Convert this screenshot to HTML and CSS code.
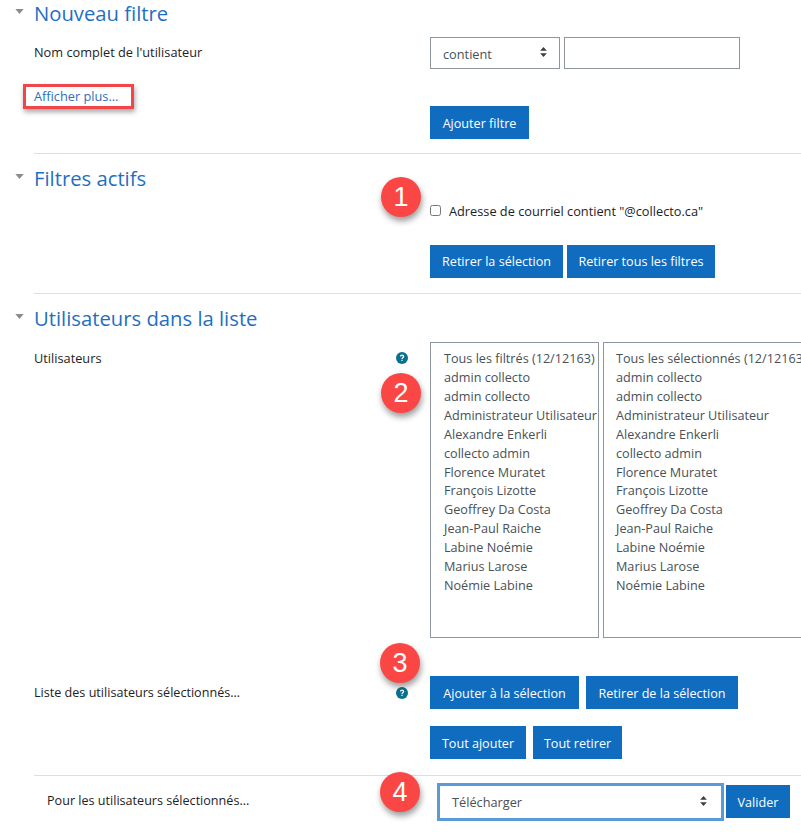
FILE: index.html
```html
<!DOCTYPE html>
<html lang="fr">
<head>
<meta charset="utf-8">
<title>Action groupée</title>
<link rel="stylesheet" href="styles.css">
</head>
<body>
<main class="page">
  <section class="sec sec-new">
    <h3 class="head"><svg class="caret" viewBox="0 0 10 6"><path d="M0 0h10L5 6z"/></svg>Nouveau filtre</h3>
    <div class="row row-name">
      <div class="label">Nom complet de l'utilisateur</div>
      <div class="ctrl inline">
        <div class="select sel-small"><span>contient</span><svg class="updown" viewBox="0 0 8 12"><path d="M4 0l4 4.6H0zM4 12L0 7.4h8z"/></svg></div>
        <div class="input"></div>
      </div>
    </div>
    <div class="row row-more">
      <div class="label"><a class="more" href="#">Afficher plus...</a></div>
      <div class="ctrl"><button class="btn w-filter">Ajouter filtre</button></div>
    </div>
  </section>

  <section class="sec sec-active">
    <h3 class="head"><svg class="caret" viewBox="0 0 10 6"><path d="M0 0h10L5 6z"/></svg>Filtres actifs</h3>
    <div class="row row-check">
      <div class="label"></div>
      <label class="ctrl check"><input type="checkbox"><span>Adresse de courriel contient "@collecto.ca"</span></label>
    </div>
    <div class="row row-btns">
      <div class="label"></div>
      <div class="ctrl btns"><button class="btn w-sel">Retirer la sélection</button><button class="btn w-allf">Retirer tous les filtres</button></div>
    </div>
  </section>

  <section class="sec sec-users">
    <h3 class="head"><svg class="caret" viewBox="0 0 10 6"><path d="M0 0h10L5 6z"/></svg>Utilisateurs dans la liste</h3>
    <div class="row row-lists">
      <div class="label label-help">Utilisateurs
        <svg class="help" viewBox="0 0 12 12"><circle cx="6" cy="6" r="6"/><path class="q" d="M3.9 4.6c0-1.3 1-2 2.2-2s2.1.8 2.1 1.9c0 1.5-1.6 1.5-1.6 2.6H5.4c0-1.7 1.5-1.8 1.5-2.5 0-.4-.4-.8-.9-.8-.6 0-.9.4-.9.8zM5.4 7.8h1.2v1.3H5.4z"/></svg>
      </div>
      <div class="ctrl lists">
        <div class="listbox lb-a">
          <div>Tous les filtrés (12/12163)</div><div>admin collecto</div><div>admin collecto</div><div>Administrateur Utilisateur</div><div>Alexandre Enkerli</div><div>collecto admin</div><div>Florence Muratet</div><div>François Lizotte</div><div>Geoffrey Da Costa</div><div>Jean-Paul Raiche</div><div>Labine Noémie</div><div>Marius Larose</div><div>Noémie Labine</div>
        </div>
        <div class="listbox lb-b">
          <div>Tous les sélectionnés (12/12163)</div><div>admin collecto</div><div>admin collecto</div><div>Administrateur Utilisateur</div><div>Alexandre Enkerli</div><div>collecto admin</div><div>Florence Muratet</div><div>François Lizotte</div><div>Geoffrey Da Costa</div><div>Jean-Paul Raiche</div><div>Labine Noémie</div><div>Marius Larose</div><div>Noémie Labine</div>
        </div>
      </div>
    </div>
    <div class="row row-actions">
      <div class="label label-help label-mid">Liste des utilisateurs sélectionnés...
        <svg class="help" viewBox="0 0 12 12"><circle cx="6" cy="6" r="6"/><path class="q" d="M3.9 4.6c0-1.3 1-2 2.2-2s2.1.8 2.1 1.9c0 1.5-1.6 1.5-1.6 2.6H5.4c0-1.7 1.5-1.8 1.5-2.5 0-.4-.4-.8-.9-.8-.6 0-.9.4-.9.8zM5.4 7.8h1.2v1.3H5.4z"/></svg>
      </div>
      <div class="ctrl btns btns-wide"><button class="btn w-add">Ajouter à la sélection</button><button class="btn w-rem">Retirer de la sélection</button></div>
    </div>
    <div class="row row-all">
      <div class="label"></div>
      <div class="ctrl btns btns-wide"><button class="btn w-alladd">Tout ajouter</button><button class="btn w-allrem">Tout retirer</button></div>
    </div>
  </section>

  <section class="bottom">
    <div class="bottom-label">Pour les utilisateurs sélectionnés...</div>
    <div class="select sel-focus"><span>Télécharger</span><svg class="updown" viewBox="0 0 8 12"><path d="M4 0l4 4.6H0zM4 12L0 7.4h8z"/></svg></div>
    <button class="btn btn-go">Valider</button>
  </section>
</main>
<div class="num n1">1</div>
<div class="num n2">2</div>
<div class="num n3">3</div>
<div class="num n4">4</div>
<div class="redbox"></div>
</body>
</html>
```
FILE: styles.css
```css
* { box-sizing: border-box; }
html, body { margin: 0; height: 833px; overflow: hidden; background: #fff; }
body {
  position: relative;
  font-family: "Open Sans", "Noto Sans", "Liberation Sans", sans-serif;
  font-size: 12.75px;
  color: #1d2125;
}
.page { width: 801px; }
.sec { margin-left: 34px; }
.sec-new { height: 153px; }
.sec-active { height: 140px; border-top: 1px solid #dfdfdf; }
.sec-users { height: 482px; border-top: 1px solid #dfdfdf; }
.head {
  position: relative;
  margin: 0;
  font-size: 20.25px;
  font-weight: 400;
  line-height: 26px;
  color: #1f6fc0;
}
.sec-active .head,
.sec-users .head { padding-top: 11px; }
.caret { position: absolute; left: -19px; bottom: 12px; width: 9px; height: 5px; }
.caret path { fill: #8a8d90; }
.row { display: flex; }
.label { width: 396px; flex: none; position: relative; }
.ctrl { flex: none; }
.row-name { margin-top: 11px; height: 32px; line-height: 18px; }
.row-name .label { padding-top: 6px; }
.inline { display: flex; gap: 4px; }
.select {
  display: flex;
  align-items: center;
  justify-content: space-between;
  background: #fff;
  color: #495057;
  border: 1px solid #8f959e;
}
.sel-small { width: 130px; height: 32px; padding: 0 12px; }
.sel-small span { padding-top: 1px; }
.updown { width: 7px; height: 10px; margin-top: -2px; }
.updown path { fill: #3b4046; }
.input { width: 176px; height: 32px; border: 1px solid #8f959e; }
.row-more { margin-top: 16px; height: 54px; }
.more { color: #2a6fbd; text-decoration: none; display: block; line-height: 18px; margin-top: 2px; }
.btn {
  display: block;
  height: 33px;
  padding: 2px 0 0;
  border: 0;
  background: #0f6cbf;
  color: #fff;
  font: inherit;
  font-size: 12.6px;
  line-height: 31px;
  text-align: center;
  white-space: nowrap;
}
.row-btns .btn { padding-top: 0; line-height: 33px; }
.w-filter { width: 99px; }
.w-sel { width: 133px; }
.w-allf { width: 148px; }
.w-add { width: 149px; }
.w-rem { width: 152px; }
.w-alladd { width: 96px; }
.w-allrem { width: 89px; }
.row-more .ctrl { margin-top: 21px; }
.row-check { margin-top: 11px; height: 43px; align-items: flex-start; }
.check { display: flex; align-items: center; gap: 8px; height: 18px; }
.check input { margin: -2px 0 0; width: 11px; height: 11px; }
.btns { display: flex; gap: 4px; }
.btns-wide { gap: 7px; }
.row-lists { margin-top: 11px; height: 296px; }
.label-help { padding-top: 7px; line-height: 18px; }
.help { position: absolute; left: 362px; top: 10px; width: 12px; height: 12px; }
.help circle { fill: #0a7090; }
.help .q { fill: #fff; }
.lists { display: flex; gap: 4px; }
.listbox {
  height: 296px;
  border: 1px solid #8f959e;
  padding: 6px 0 0 13px;
  font-size: 12.65px;
  line-height: 18.92px;
  color: #495057;
  overflow: hidden;
  white-space: nowrap;
}
.lb-a { width: 169px; }
.lb-b { width: 240px; padding-left: 12px; }
.row-actions { margin-top: 38px; height: 33px; }
.label-mid { padding-top: 8px; font-size: 12.6px; }
.label-mid .help { top: 11px; }
.row-all { margin-top: 17px; }
.bottom {
  margin-left: 34px;
  border-top: 1px solid #dfdfdf;
  height: 58px;
  display: flex;
  align-items: flex-start;
  padding-top: 7px;
}
.bottom-label { width: 403px; padding-left: 13px; padding-top: 9px; font-size: 12.6px; line-height: 18px; flex: none; }
.sel-focus {
  width: 287px;
  height: 38px;
  border: 3px solid #5b9ad8;
  padding: 0 14px 0 12px;
  flex: none;
}
.btn-go { margin: 2px 0 0 2px; flex: none; width: 64px; }
.num {
  position: absolute;
  width: 40px;
  height: 40px;
  border-radius: 50%;
  background: #fb4646;
  color: #fff;
  font-size: 27px;
  line-height: 40px;
  text-align: center;
  font-family: "Liberation Sans", sans-serif;
  box-shadow: 1px 4px 6px rgba(0, 0, 0, .4);
}
.n1 { left: 381px; top: 177px; }
.n2 { left: 381px; top: 373px; }
.n3 { left: 380px; top: 643px; }
.n4 { left: 380px; top: 772px; }
.redbox {
  position: absolute;
  left: 23px;
  top: 84px;
  width: 111px;
  height: 25px;
  border: 3px solid #f0464a;
  box-shadow: 1px 3px 5px rgba(0, 0, 0, .35);
}
```
